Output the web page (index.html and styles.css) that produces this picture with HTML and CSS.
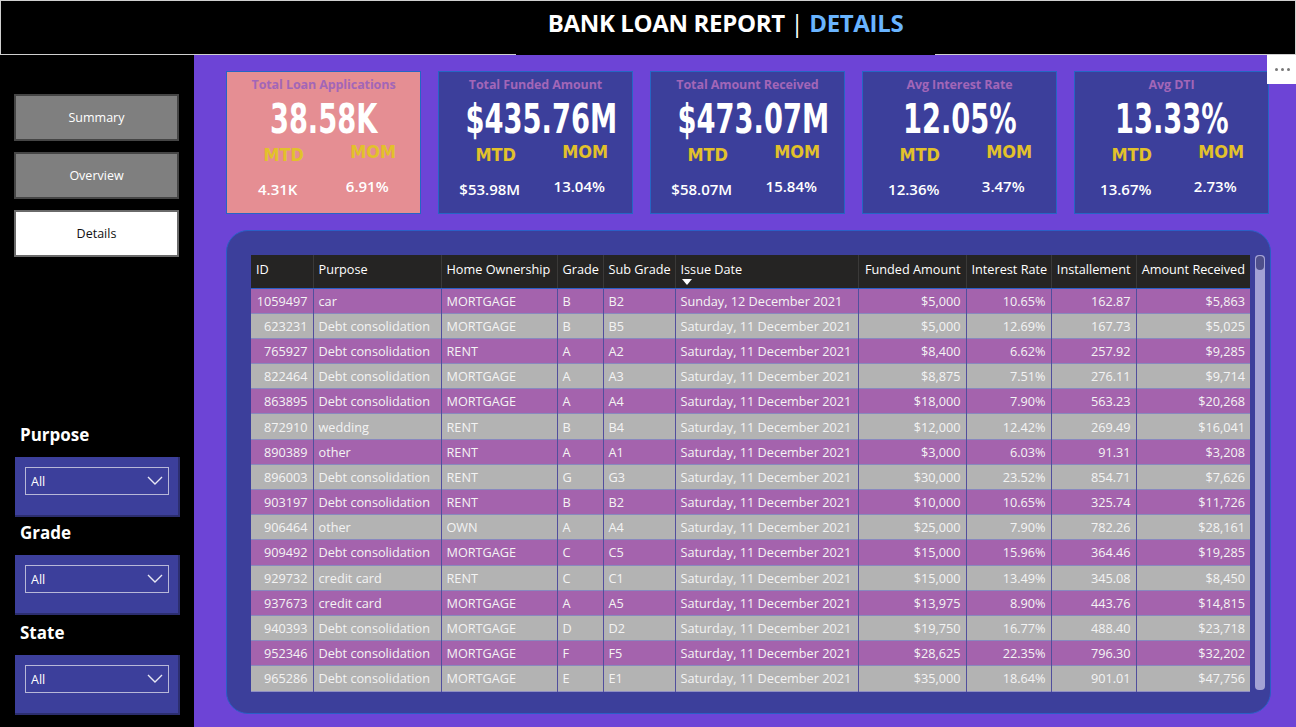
FILE: index.html
```html
<!DOCTYPE html>
<html>
<head>
<meta charset="utf-8">
<link rel="stylesheet" href="styles.css">
</head>
<body>
<div class="page">
  <header class="topbar">
    <div class="title-box">
      <h1 class="title">BANK LOAN REPORT <span class="bar">|</span> <span class="accent">DETAILS</span></h1>
    </div>
  </header>
  <div class="main">
    <aside class="sidebar">
      <nav class="nav">
        <div class="nav-btn">Summary</div>
        <div class="nav-btn">Overview</div>
        <div class="nav-btn active">Details</div>
      </nav>
      <div class="filters">
        <div class="filter">
          <div class="filter-label">Purpose</div>
          <div class="filter-box"><div class="select"><span>All</span><svg class="chev" width="16" height="9" viewBox="0 0 16 9"><polyline points="1,1 8,8 15,1" fill="none" stroke="#e8e8f4" stroke-width="1.4"/></svg></div></div>
        </div>
        <div class="filter">
          <div class="filter-label">Grade</div>
          <div class="filter-box"><div class="select"><span>All</span><svg class="chev" width="16" height="9" viewBox="0 0 16 9"><polyline points="1,1 8,8 15,1" fill="none" stroke="#e8e8f4" stroke-width="1.4"/></svg></div></div>
        </div>
        <div class="filter">
          <div class="filter-label">State</div>
          <div class="filter-box"><div class="select"><span>All</span><svg class="chev" width="16" height="9" viewBox="0 0 16 9"><polyline points="1,1 8,8 15,1" fill="none" stroke="#e8e8f4" stroke-width="1.4"/></svg></div></div>
        </div>
      </div>
    </aside>
    <section class="content">
      <div class="more"><span></span><span></span><span></span></div>
      <div class="kpis">
        <div class="kpi pink">
          <div class="kpi-title">Total Loan Applications</div>
          <div class="kpi-value"><span>38.58K</span></div>
          <div class="kpi-sub"><div class="lbl">MTD</div><div class="lbl up">MOM</div><div class="val">4.31K</div><div class="val up">6.91%</div></div>
        </div>
        <div class="kpi">
          <div class="kpi-title">Total Funded Amount</div>
          <div class="kpi-value"><span>$435.76M</span></div>
          <div class="kpi-sub"><div class="lbl">MTD</div><div class="lbl up">MOM</div><div class="val">$53.98M</div><div class="val up">13.04%</div></div>
        </div>
        <div class="kpi">
          <div class="kpi-title">Total Amount Received</div>
          <div class="kpi-value"><span>$473.07M</span></div>
          <div class="kpi-sub"><div class="lbl">MTD</div><div class="lbl up">MOM</div><div class="val">$58.07M</div><div class="val up">15.84%</div></div>
        </div>
        <div class="kpi">
          <div class="kpi-title">Avg Interest Rate</div>
          <div class="kpi-value"><span>12.05%</span></div>
          <div class="kpi-sub"><div class="lbl">MTD</div><div class="lbl up">MOM</div><div class="val">12.36%</div><div class="val up">3.47%</div></div>
        </div>
        <div class="kpi">
          <div class="kpi-title">Avg DTI</div>
          <div class="kpi-value"><span>13.33%</span></div>
          <div class="kpi-sub"><div class="lbl">MTD</div><div class="lbl up">MOM</div><div class="val">13.67%</div><div class="val up">2.73%</div></div>
        </div>
      </div>
      <div class="table-card">
        <div class="table-wrap">
          <table class="grid">
            <colgroup>
              <col class="c-id"><col class="c-purpose"><col class="c-home"><col class="c-grade"><col class="c-sub"><col class="c-date"><col class="c-funded"><col class="c-rate"><col class="c-inst"><col class="c-recv">
            </colgroup>
            <thead>
              <tr>
                <th>ID</th><th>Purpose</th><th>Home Ownership</th><th>Grade</th><th>Sub Grade</th>
                <th>Issue Date<span class="sort"></span></th>
                <th class="num">Funded Amount</th><th class="num">Interest Rate</th><th class="num">Installement</th><th class="num">Amount Received</th>
              </tr>
            </thead>
            <tbody>
              <tr><td class="num">1059497</td><td>car</td><td>MORTGAGE</td><td>B</td><td>B2</td><td>Sunday, 12 December 2021</td><td class="num">$5,000</td><td class="num">10.65%</td><td class="num">162.87</td><td class="num">$5,863</td></tr>
              <tr><td class="num">623231</td><td>Debt consolidation</td><td>MORTGAGE</td><td>B</td><td>B5</td><td>Saturday, 11 December 2021</td><td class="num">$5,000</td><td class="num">12.69%</td><td class="num">167.73</td><td class="num">$5,025</td></tr>
              <tr><td class="num">765927</td><td>Debt consolidation</td><td>RENT</td><td>A</td><td>A2</td><td>Saturday, 11 December 2021</td><td class="num">$8,400</td><td class="num">6.62%</td><td class="num">257.92</td><td class="num">$9,285</td></tr>
              <tr><td class="num">822464</td><td>Debt consolidation</td><td>MORTGAGE</td><td>A</td><td>A3</td><td>Saturday, 11 December 2021</td><td class="num">$8,875</td><td class="num">7.51%</td><td class="num">276.11</td><td class="num">$9,714</td></tr>
              <tr><td class="num">863895</td><td>Debt consolidation</td><td>MORTGAGE</td><td>A</td><td>A4</td><td>Saturday, 11 December 2021</td><td class="num">$18,000</td><td class="num">7.90%</td><td class="num">563.23</td><td class="num">$20,268</td></tr>
              <tr><td class="num">872910</td><td>wedding</td><td>RENT</td><td>B</td><td>B4</td><td>Saturday, 11 December 2021</td><td class="num">$12,000</td><td class="num">12.42%</td><td class="num">269.49</td><td class="num">$16,041</td></tr>
              <tr><td class="num">890389</td><td>other</td><td>RENT</td><td>A</td><td>A1</td><td>Saturday, 11 December 2021</td><td class="num">$3,000</td><td class="num">6.03%</td><td class="num">91.31</td><td class="num">$3,208</td></tr>
              <tr><td class="num">896003</td><td>Debt consolidation</td><td>RENT</td><td>G</td><td>G3</td><td>Saturday, 11 December 2021</td><td class="num">$30,000</td><td class="num">23.52%</td><td class="num">854.71</td><td class="num">$7,626</td></tr>
              <tr><td class="num">903197</td><td>Debt consolidation</td><td>RENT</td><td>B</td><td>B2</td><td>Saturday, 11 December 2021</td><td class="num">$10,000</td><td class="num">10.65%</td><td class="num">325.74</td><td class="num">$11,726</td></tr>
              <tr><td class="num">906464</td><td>other</td><td>OWN</td><td>A</td><td>A4</td><td>Saturday, 11 December 2021</td><td class="num">$25,000</td><td class="num">7.90%</td><td class="num">782.26</td><td class="num">$28,161</td></tr>
              <tr><td class="num">909492</td><td>Debt consolidation</td><td>MORTGAGE</td><td>C</td><td>C5</td><td>Saturday, 11 December 2021</td><td class="num">$15,000</td><td class="num">15.96%</td><td class="num">364.46</td><td class="num">$19,285</td></tr>
              <tr><td class="num">929732</td><td>credit card</td><td>RENT</td><td>C</td><td>C1</td><td>Saturday, 11 December 2021</td><td class="num">$15,000</td><td class="num">13.49%</td><td class="num">345.08</td><td class="num">$8,450</td></tr>
              <tr><td class="num">937673</td><td>credit card</td><td>MORTGAGE</td><td>A</td><td>A5</td><td>Saturday, 11 December 2021</td><td class="num">$13,975</td><td class="num">8.90%</td><td class="num">443.76</td><td class="num">$14,815</td></tr>
              <tr><td class="num">940393</td><td>Debt consolidation</td><td>MORTGAGE</td><td>D</td><td>D2</td><td>Saturday, 11 December 2021</td><td class="num">$19,750</td><td class="num">16.77%</td><td class="num">488.40</td><td class="num">$23,718</td></tr>
              <tr><td class="num">952346</td><td>Debt consolidation</td><td>MORTGAGE</td><td>F</td><td>F5</td><td>Saturday, 11 December 2021</td><td class="num">$28,625</td><td class="num">22.35%</td><td class="num">796.30</td><td class="num">$32,202</td></tr>
              <tr><td class="num">965286</td><td>Debt consolidation</td><td>MORTGAGE</td><td>E</td><td>E1</td><td>Saturday, 11 December 2021</td><td class="num">$35,000</td><td class="num">18.64%</td><td class="num">901.01</td><td class="num">$47,756</td></tr>
            </tbody>
          </table>
          <div class="scrollbar"><div class="thumb"></div></div>
        </div>
      </div>
    </section>
  </div>
</div>
</body>
</html>
```

FILE: styles.css
```css
* { box-sizing: border-box; }
html, body { margin: 0; padding: 0; }
body {
  width: 1296px;
  height: 727px;
  overflow: hidden;
  background: #000;
  font-family: "Open Sans", "Noto Sans", sans-serif;
  color: #fff;
}
.page { width: 1296px; height: 727px; display: flex; flex-direction: column; }

.topbar {
  height: 55px;
  flex: none;
  background: #000;
  border: 1px solid #cfcfcf;
  display: flex;
  justify-content: flex-start;
  padding-left: 515px;
}
.title-box {
  width: 419px;
  margin-bottom: -2px;
  background: #000;
  display: flex;
  justify-content: center;
}
.title {
  margin: 5px 0 0 0;
  font-size: 24px;
  font-weight: 700;
  letter-spacing: -0.35px;
  color: #fff;
  white-space: nowrap;
}
.title .bar { font-weight: 400; }
.title .accent { color: #69b4ff; }

.main { flex: 1; display: flex; min-height: 0; }

.sidebar {
  width: 194px;
  flex: none;
  background: #000;
  display: flex;
  flex-direction: column;
  padding: 39px 0 0 14px;
}
.nav { display: flex; flex-direction: column; gap: 11px; }
.nav-btn {
  width: 165px;
  height: 47px;
  background: #7f7f7f;
  border: 2px solid #454545;
  display: flex;
  align-items: center;
  justify-content: center;
  font-size: 12.5px;
  color: #fff;
}
.nav-btn.active { background: #fff; color: #111; border-color: #6a6a6a; }

.filters { margin-top: 167px; display: flex; flex-direction: column; }
.filter { display: flex; flex-direction: column; }
.filter-label {
  font-size: 17px;
  font-weight: 700;
  padding-left: 6px;
  height: 33px;
  line-height: 22px;
}
.filter + .filter .filter-label { margin-top: 5px; }
.filter:nth-child(3) .filter-label { margin-top: 7px; height: 33px; }
.filter-box {
  width: 165px;
  height: 60px;
  margin-left: 1px;
  background: #3c3f9b;
  border-right: 2px solid #2c2e70;
  border-bottom: 2px solid #2c2e70;
  padding: 10px 9px 0 10px;
}
.select {
  height: 28px;
  border: 1px solid #b8b8d8;
  display: flex;
  align-items: center;
  justify-content: space-between;
  padding: 0 5px;
  font-size: 12.5px;
  color: #fff;
}
.chev { margin-top: -2px; }

.content {
  flex: 1;
  background: #6d44d6;
  padding: 16px 26px 13px 32px;
  display: flex;
  flex-direction: column;
  position: relative;
}
.more {
  position: absolute;
  top: 0;
  right: 0;
  width: 30px;
  height: 29px;
  background: #fff;
  display: flex;
  gap: 3px;
  justify-content: center;
  padding-top: 13px;
}
.more span { width: 3px; height: 3px; border-radius: 50%; background: #777; }

.kpis {
  display: grid;
  grid-template-columns: repeat(5, 195px);
  column-gap: 17px;
  height: 143px;
}
.kpi {
  background: #3c3f9b;
  border: 1px solid #2566c4;
  display: flex;
  flex-direction: column;
  align-items: center;
  padding-top: 4px;
}
.kpi.pink { background: #e58e93; }
.kpi-title {
  font-size: 12.5px;
  font-weight: 700;
  color: #a266b8;
  letter-spacing: -0.1px;
  height: 18px;
}
.kpi-value {
  font-family: "DejaVu Sans Condensed", "DejaVu Sans", sans-serif;
  font-stretch: condensed;
  font-weight: 700;
  font-size: 41px;
  line-height: 44px;
  margin-top: 3px;
  width: 100%;
  text-align: center;
  white-space: nowrap;
}
.kpi-value span {
  display: inline-block;
  transform: scaleX(0.74);
}
.kpi-sub {
  width: 100%;
  display: grid;
  grid-template-columns: 1fr 1fr;
  grid-template-rows: 30px 36px;
  padding: 0 2px 0 12px;
  justify-items: center;
}
.lbl {
  font-family: "DejaVu Sans Condensed", "DejaVu Sans", sans-serif;
  font-stretch: condensed;
  font-weight: 700;
  font-size: 18px;
  color: #e2c12b;
  padding-top: 3px;
}
.val {
  font-size: 15px;
  font-weight: 600;
  padding-top: 8px;
  margin-left: -12px;
}
.up { margin-top: -3px; }

.table-card {
  margin-top: 16px;
  flex: 1;
  background: #3c3f9b;
  border: 1px solid #2a5fc6;
  border-radius: 22px;
  padding: 24px 5px 0 24px;
}
.table-wrap { display: flex; gap: 5px; align-items: flex-start; }

.grid {
  width: 999px;
  table-layout: fixed;
  border-collapse: collapse;
  font-size: 12.7px;
  border-bottom: 1px solid #8f8fc4;
}
.c-id { width: 62px; }
.c-purpose { width: 128px; }
.c-home { width: 116px; }
.c-grade { width: 46px; }
.c-sub { width: 72px; }
.c-date { width: 183px; }
.c-funded { width: 108px; }
.c-rate { width: 85px; }
.c-inst { width: 85px; }
.c-recv { width: 114px; }

.grid th {
  background: #252423;
  height: 33px;
  font-weight: 400;
  text-align: left;
  vertical-align: top;
  padding: 5px 5px 0 5px;
  color: #fff;
  white-space: nowrap;
  border-left: 1px solid #3a3938;
  border-bottom: 1px solid #2a5fc6;
}
.grid th:first-child { border-left: none; }
.grid th.num { text-align: right; }
.sort {
  display: block;
  width: 0;
  height: 0;
  margin-top: 1px;
  margin-left: 1px;
  border-left: 5px solid transparent;
  border-right: 5px solid transparent;
  border-top: 6px solid #fff;
}
.grid td {
  height: 25.2px;
  padding: 0 5px;
  color: #f4f4f4;
  white-space: nowrap;
  overflow: hidden;
  border-left: 1px solid rgba(120, 110, 160, 0.35);
  border-top: 1px solid rgba(170, 170, 205, 0.7);
}
.grid td:first-child { border-left: none; }
.grid tbody tr:nth-child(odd) td { background: #a463ad; }
.grid tbody tr:nth-child(even) td { background: #b3b3b3; }
.grid td.num { text-align: right; }

.scrollbar {
  width: 10px;
  height: 435px;
  background: #a3a2d4;
  border-radius: 4px;
  padding: 1px;
}
.thumb {
  width: 8px;
  height: 14px;
  background: #4f4f8a;
  border-radius: 4px;
}
```
